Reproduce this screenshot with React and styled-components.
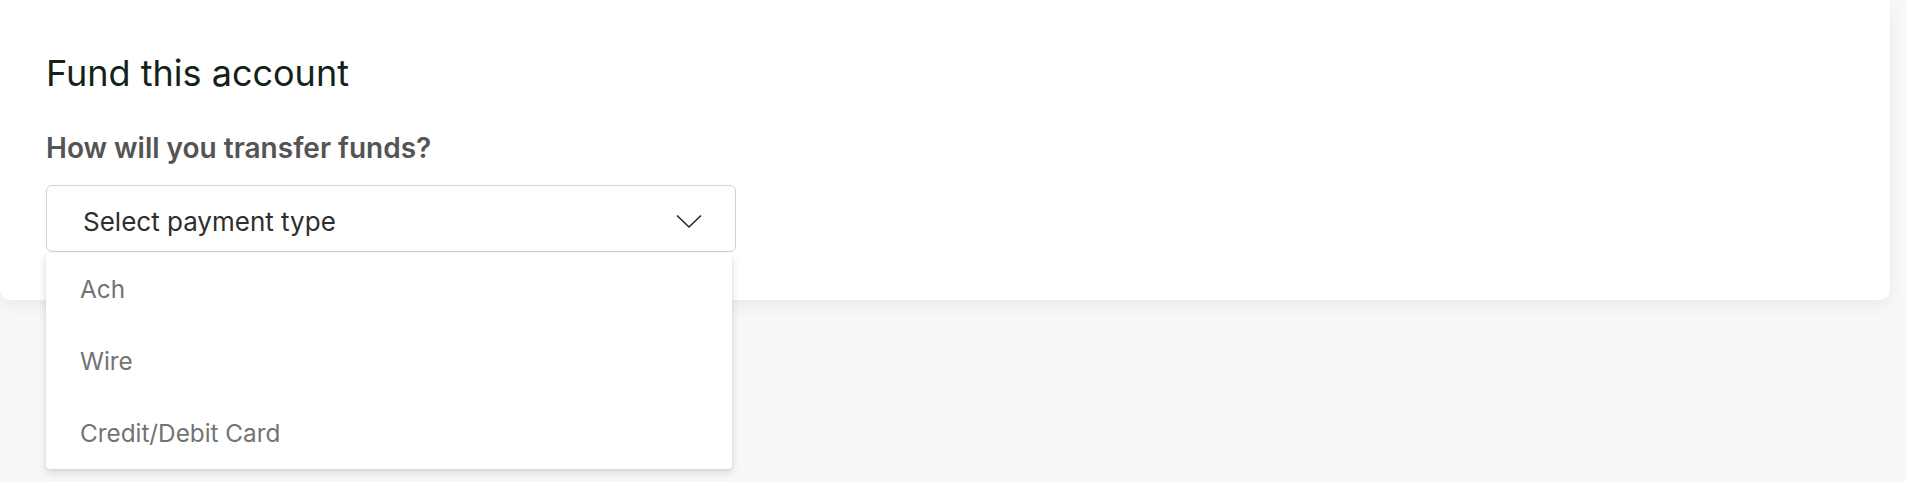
import React from "react";
import styled, { createGlobalStyle } from "styled-components";

const Global = createGlobalStyle`
  html, body { margin: 0; padding: 0; background: #f8f8f8; }
  body { font-family: Inter, "Noto Sans", "Liberation Sans", sans-serif; }
  * { box-sizing: border-box; }
`;

const Page = styled.div`
  min-height: 482px;
  padding: 0 16px 0 0;
  background: #f8f8f8;
`;

const Card = styled.section`
  background: #ffffff;
  border-radius: 0 0 10px 10px;
  box-shadow: 0 6px 18px rgba(0, 0, 0, 0.06);
  padding: 51px 46px 48px;
  height: 300px;
`;

const Title = styled.h2`
  margin: 0;
  font-size: 36px;
  line-height: 44px;
  font-weight: 400;
  color: #132219;
`;

const Label = styled.div`
  margin-top: 36px;
  font-size: 28px;
  line-height: 34px;
  font-weight: 600;
  color: #545454;
`;

const SelectWrap = styled.div`
  position: relative;
  margin-top: 20px;
  width: 690px;
`;

const SelectBox = styled.button`
  display: flex;
  align-items: center;
  justify-content: space-between;
  width: 100%;
  height: 67px;
  padding: 5px 33px 0 36px;
  background: #fff;
  border: 1.5px solid #d2d2d2;
  border-radius: 6px;
  font-family: inherit;
  font-size: 26px;
  color: #2e2e2e;
  cursor: pointer;
`;

const Menu = styled.ul`
  position: absolute;
  left: 0;
  top: 100%;
  width: calc(100% - 4px);
  margin: 1px 0 0;
  padding: 0;
  list-style: none;
  background: #fff;
  border-radius: 4px;
  box-shadow: 0 4px 10px rgba(0, 0, 0, 0.12), 0 1px 3px rgba(0, 0, 0, 0.08);
  z-index: 10;
`;

const Option = styled.li`
  display: flex;
  align-items: center;
  height: 72px;
  padding-left: 34px;
  font-size: 24.3px;
  color: #737373;
`;

const Chevron = () => (
  <svg width="26" height="15" viewBox="0 0 26 15" fill="none">
    <polyline
      points="1,1.5 13,13 25,1.5"
      stroke="#1e2b24"
      strokeWidth="1.6"
      fill="none"
    />
  </svg>
);

export default function App() {
  const options = ["Ach", "Wire", "Credit/Debit Card"];
  return (
    <>
      <Global />
      <Page>
        <Card>
          <Title>Fund this account</Title>
          <Label>How will you transfer funds?</Label>
          <SelectWrap>
            <SelectBox type="button">
              <span>Select payment type</span>
              <Chevron />
            </SelectBox>
            <Menu>
              {options.map((o) => (
                <Option key={o}>{o}</Option>
              ))}
            </Menu>
          </SelectWrap>
        </Card>
      </Page>
    </>
  );
}
